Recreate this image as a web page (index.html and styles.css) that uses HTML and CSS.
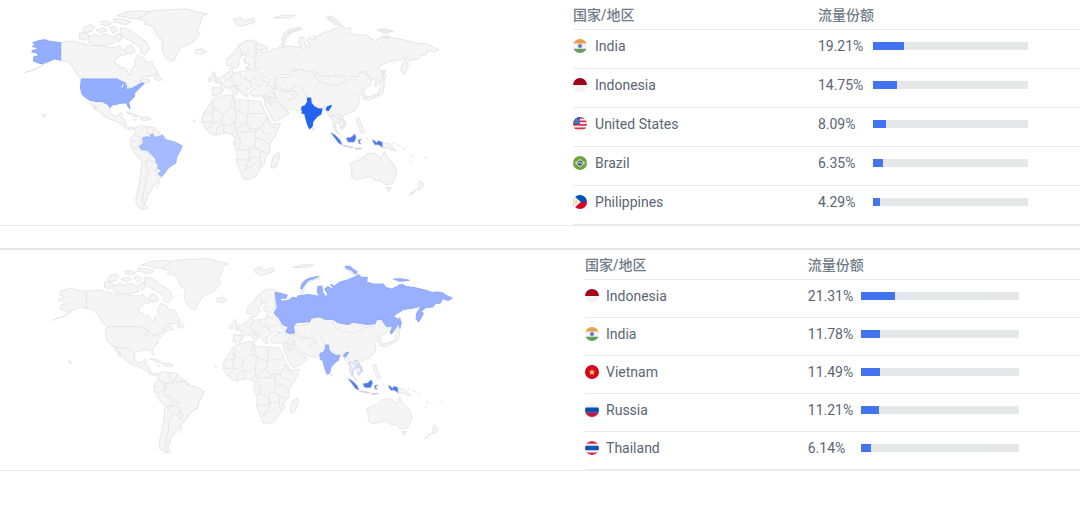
FILE: index.html
```html
<!DOCTYPE html>
<html lang="zh-CN">
<head>
<meta charset="utf-8">
<meta name="viewport" content="width=device-width, initial-scale=1">
<title>流量份额</title>
<link rel="stylesheet" href="styles.css">
</head>
<body>
<svg class="defs" aria-hidden="true">
  <defs>
    <clipPath id="round"><circle cx="8" cy="8" r="8"/></clipPath>
    <symbol id="flag-in" viewBox="0 0 16 16"><g clip-path="url(#round)"><path fill="#f4f5f8" d="M0 0h16v16H0z"/><path fill="#e9a04a" d="M0 0h16v5H0z"/><path fill="#61a356" d="M0 11h16v5H0z"/><circle cx="8" cy="8" r="2.200" fill="#5b6fc0" stroke="#9aa8dc" stroke-width=".8"/></g></symbol>
    <symbol id="flag-id" viewBox="0 0 16 16"><g clip-path="url(#round)"><path fill="#f3f3f3" d="M0 0h16v16H0z"/><path fill="#a2001d" d="M0 0h16v8H0z"/></g></symbol>
    <symbol id="flag-us" viewBox="0 0 16 16"><g clip-path="url(#round)"><path fill="#f5f0f2" d="M0 0h16v16H0z"/><path fill="#d2344c" d="M0 0h16v2H0zM0 4h16v2H0zM0 8h16v2H0zM0 12h16v2H0z"/><path fill="#2f5fb5" d="M0 0h8v8H0z"/><path stroke="#dbe4f5" stroke-width=".9" stroke-dasharray="1 1.4" d="M1 3.500h7M2 6h6"/></g></symbol>
    <symbol id="flag-br" viewBox="0 0 16 16"><circle cx="8" cy="8" r="8" fill="#6da544"/><path fill="#e9e37c" d="M8 3l6 5-6 5-6-5z"/><circle cx="8" cy="8" r="3" fill="#3c63a8"/><path d="M5.500 7.300q3-.5 5 1.700" fill="none" stroke="#f0f0f0"/></symbol>
    <symbol id="flag-ph" viewBox="0 0 16 16"><g clip-path="url(#round)"><path fill="#0052b4" d="M0 0h16v8H0z"/><path fill="#d80027" d="M0 8h16v8H0z"/><path fill="#f3f3f3" d="M0 0l9 8-9 8z"/><circle cx="3.500" cy="8" r="1.600" fill="#ffda44"/></g></symbol>
    <symbol id="flag-vn" viewBox="0 0 16 16"><circle cx="8" cy="8" r="8" fill="#d8001f"/><path fill="#ffda44" d="M8 4l1 3h3.100L9.600 8.800l1 3L8 10l-2.600 1.800 1-3L3.900 7H7z"/></symbol>
    <symbol id="flag-ru" viewBox="0 0 16 16"><g clip-path="url(#round)"><path fill="#f3f3f3" d="M0 0h16v16H0z"/><path fill="#0a4db0" d="M0 5h16v6H0z"/><path fill="#c5163d" d="M0 11h16v5H0z"/></g></symbol>
    <symbol id="flag-th" viewBox="0 0 16 16"><g clip-path="url(#round)"><path fill="#eff0f5" d="M0 0h16v16H0z"/><path fill="#d2344c" d="M0 0h16v3H0zM0 13h16v3H0z"/><path fill="#1455ae" d="M0 5.500h16v5H0z"/></g></symbol>

    <symbol id="world" viewBox="0 0 1275 660">
      <g class="land">
        <path d="M122 128L150 124 166 124 180 129 205 136 240 137 275 143 300 138 305 150 325 150 318 164 302 165 286 178 284 190 300 200 318 206 324 222 332 224 334 208 345 198 344 180 352 166 370 172 380 188 395 184 405 205 414 216 395 228 372 230 356 246 372 238 385 236 390 246 375 250 366 248 345 262 330 264 316 255 300 244 290 237 184 237 172 225 158 200 142 184 122 181z"/>
        <path d="M404 228L414 222 425 238 418 242 404 238z"/>
        <path d="M208 300L225 304 245 304 262 312 270 322 272 340 282 350 296 345 300 338 308 340 304 352 316 362 318 376 330 382 345 384 335 390 318 384 302 370 284 362 262 354 245 344 236 330 222 314 229 332 212 312z"/>
        <path d="M318 336L340 340 360 350 345 350 330 343zM362 352L378 350 392 357 380 361 362 359zM66 342l8 3 3 6-6 0zM340 358l10 1-4 3z"/>
        <path d="M345 384L362 376 380 380 402 382 415 396 432 408 440 418 470 428 486 438 480 456 470 470 466 490 448 500 438 514 426 530 415 536 416 548 400 556 394 572 384 580 380 598 374 610 384 626 365 627 348 614 348 590 354 570 360 540 362 510 366 480 350 468 338 450 330 428 334 412 345 402z"/>
        <path d="M345 402l20 12 18-4m-20 2v20l-22 12m-8-18l15-5m20 27q20 10 22 24l-16 14 12 22q-12 30-10 52-8 20-10 46l4 24m0-144l28-4 14 14-4 18m-18-14l24 20-8 6m12 20l-10 22M382 378l-2 18 12 10m10-24l-4 20m16-8l2 14"/>
        <path d="M370 42L400 32 440 29 500 27 530 35 562 42 545 50 540 75 530 88 538 102 520 125 500 135 480 145 470 165 460 184 440 178 430 160 424 140 430 125 412 108 402 84 386 74 372 72 380 64 355 58z"/>
        <path d="M525 150L545 146 557 154 548 162 528 161zM520 360l5 1-2 4z"/>
        <path d="M290 48L320 36 360 32 390 35 368 48 350 56 330 56 318 50zM283 56l28 2 20 8-14 8-22-6-16-2zM240 66l20-3 14 8-12 6-20-4zM190 84l20-10 14 6-10 14-24 6zM178 100l18-4 12 12-12 12-18-4zM206 112l20-10 14 8 14-8 24 8 6 18-26 8-30-2-22-6zM268 84l14-4 10 12-12 8zM284 108l14-8 8 14-14 12zM228 90l22-6 12 8-20 6zM300 84l20 2 20 12 18 14 22 14 8 22-14 16-14-8 4-14-22-12-16-10-22-14zM318 140l16-4 12 18-16 8-14-8z"/>
        <path d="M575 222l8-8 4 14 12 12-6 10-10-4 2-14zM566 232l10-2 0 12-10 3z"/>
      </g>
      <g class="land" transform="translate(600 0)">
        <path d="M-22 262L2 264 0 248-14 240 2 234 14 224 26 216 30 205 38 206 36 218 54 216 80 212 78 202 88 192 74 190 70 180 80 164 68 160 58 178 56 194 46 206 34 198 20 196 20 178 38 162 54 138 74 124 92 120 110 126 104 142 106 164 104 186 108 210 128 240 146 250 140 264 160 278 168 300 150 290 132 288 98 288 88 278 98 268 122 256 104 254 92 262 78 272 84 290 72 286 56 268 42 256 54 274 46 284 30 264 14 262 0 282-18 288-24 282z"/>
        <path d="M-24 300L-10 292 10 286 40 284 44 298 62 300 82 300 120 304 128 322 142 352 156 372 182 370 168 402 150 430 148 458 132 474 136 488 124 500 106 530 84 538 68 535 60 510 48 482 52 458 40 430 46 414 34 402 14 398-16 406-32 398-44 384-56 366-50 340-36 320z"/>
        <path d="M130 286L168 298 162 272 150 262 162 250 166 234 208 230 216 214 240 208 280 216 296 228 322 238 350 228 380 236 406 238 412 220 424 216 440 226 456 242 450 256 440 262 424 268 432 278 440 294 430 298 422 280 410 282 418 298 416 314 400 334 378 342 364 350 374 362 378 374 364 390 356 370 346 366 348 388 360 404 352 400 342 382 338 358 328 350 318 330 304 328 244 334 210 328 190 322 175 310 180 326 200 330 206 340 180 358 162 364 148 342 134 312z"/>
        <path d="M438 290l10 0 24-8 8-18 2-24 8-2 2 20-6 24-20 8-18 10-8 0zM408 358l10-4 4 18 12 22-10 6-8-20zM478 238l4-24 14-4-8 18z"/>
        <path d="M152 500L160 468 176 458 178 474 168 500 158 504z"/>
        <path d="M390 492L420 478 440 462 462 458 470 466 484 476 492 454 500 472 524 498 530 520 516 550 496 554 480 540 468 542 450 528 430 534 408 538 394 530 396 515zM498 562l14 0-6 12zM598 542l12 10-6 12-10 6zM590 568l-16 16-6 0 14-14zM488 428l20 4 20 20-12-2-12-6-16 0zM516 428l10 2m4 4l12 6m4 2l10 8m18 16l6 10m-12 8l8 4m38-14l8-4"/>
        <path d="M40 58l22-6 10 12 28-10 4 12-30 10-16 2-14-10zM160 54l30-8 36 0-20 8zM318 52l10-4 20 16 14 12-16-2-18-14zM470 90l24-4 22 8-20 6zM184 134q6-32 38-44l26-6-10 6-26 8-14 18-6 20zM276 386l6 0 0 6z"/>
        <path d="M-20 302L-22 322 8 344 32 322 38 290M-50 340H-22V322M-22 340V366H-52M8 344L6 362-22 370-40 388M32 322L50 330 46 360 30 376 6 372-10 384-12 404M10 372L12 398M44 298V328M50 330L84 346V300M84 340H128M84 346L78 368 92 388 122 382 140 356M46 360L44 390 34 402M78 368L50 386 52 410M92 388L76 396 50 396M52 410L62 420 58 444 46 448M76 396L104 394 108 414 104 440 88 444 86 452 58 448M104 394L122 382 130 398 150 402M108 414L130 420 148 432M104 440L122 452 140 460M86 452L88 480H50M88 480L96 470 118 474 124 500M88 480L74 510 66 514M74 510L92 500 108 490M122 452L118 474M140 356L150 376 165 384"/>
        <path d="M76 204l24 8m-42 2l4 18 26 12 20-12m-42 20l-14 6-22-20m10-18l-10 16-12 4m2 26l16-8 8 2m30-32l18 24m-26-84l-8-32m8 32l24-20M0 248l14 8m-14 24l4-16m158-2l28 14 34-4 12 14-30 16m-70-26l18 40m-4-12l28 4 22 30m-54-60l24-20 34 16 24-18m-12 26l18 2"/>
        <path d="M280 222L296 244 320 252 346 258 376 246 392 238M244 262L256 282 262 292M284 314L300 322 318 322 334 316M338 356L334 334M436 262L428 278M130 290L146 310 160 322"/>
      </g>
      <g class="land russia" transform="matrix(1.033 0 0 1.029 597 -16.400)">
        <path d="M106 143L122 146 142 152 138 161 118 160 126 170 148 166 158 158 170 161 174 154 205 150 232 154 240 158 232 142 234 126 246 124 248 142 258 158 264 148 254 134 264 126 276 132 280 128 272 120 284 124 300 112 322 106 346 96 356 90 364 98 382 98 380 112 400 118 430 118 437 128 456 134 465 128 480 124 520 128 560 138 576 144 590 142 606 144 622 154 637 160 624 168 608 162 600 176 584 178 580 187 556 190 544 200 550 208 536 232 528 222 530 206 544 184 526 190 490 195 470 207 460 216 474 224 474 240 455 268 450 264 458 247 440 246 425 225 410 225 405 238 380 240 340 233 325 240 295 235 280 225 254 224 240 217 212 221 210 232 170 235 160 245 164 265 150 268 138 262 145 248 128 240 120 225 103 205 112 190 108 165zM182 130q4-22 28-30l26-5-14 7-18 6-14 18-4 8zM316 66l12-2 10 8 14 10-6 6-12-12-14-4zM462 103l22 0 24 4-20 2-10 0zM474 122l14-2 10 6-12 2zM478 220l6 14-4 18-4-14z"/>
      </g>
      <g class="land usa">
        <path d="M38 128L60 121 75 119 90 124 122 128 122 181 104 176 90 182 75 190 68 192 54 188 40 182 42 170 56 168 50 158 36 156 36 152 52 148 50 142 38 140 46 133z"/>
        <path d="M184 237L290 237 305 244 318 250 305 253 302 264 308 265 312 254 320 256 318 268 336 265 350 257 366 248 372 250 360 262 350 272 342 280 344 288 334 298 326 306 330 326 326 322 318 308 300 310 290 313 278 314 270 322 262 312 245 304 225 304 208 300 196 292 186 282 181 262z"/>
      </g>
      <path class="aleutian" d="M78 188L50 206 14 218"/>
      <path class="land brazil" d="M358 440L370 430 368 414 382 410 392 414 390 404 398 402 402 412 428 406 434 418 466 427 486 438 478 455 470 470 467 488 448 500 438 512 425 529 415 523 424 510 412 505 416 494 408 486 406 474 394 462 382 450 366 450z"/>
      <g transform="translate(600 0)">
        <path class="land india" d="M262 294L272 294 273 308 282 320 294 326 306 327 302 342 290 350 278 365 276 380 268 386 262 372 256 352 254 341 245 339 248 334 244 328 246 320 256 316 262 306zM318 328l4-8 12-4-4 8-6 8z"/>
        <path class="land indonesia" d="M332 398L345 405 360 420 366 434 355 429 345 415zM378 414L392 412 404 402 408 412 402 426 384 426zM414 420l10-2-7 6 5 8-6-2zM456 420l8 2 5 7 5-7 12 4v16l-10-8-12 0z"/>
        <path class="land islands" d="M368 437l14 0 16 5-14 0zM404 444l22 0-14 4zM440 414l4 6"/>
        <path class="land thailand" d="M334 352l8-6 10 10 8 0 2 8-14 2-2 14-2 8-6-14 2-14z"/>
        <path class="land vietnam" d="M350 344l10-3 4 8 10 16 2 10-10 10-2-4 8-8-6-14z"/>
      </g>
    </symbol>
  </defs>
</svg>

<main>
  <section class="panel panel-first">
    <svg class="map" viewBox="0 0 1275 660" role="img" aria-label="India, Indonesia, United States, Brazil, Philippines"><use href="#world"/></svg>
    <table class="shares">
      <thead><tr><th class="country" scope="col">国家/地区</th><th scope="col">流量份额</th></tr></thead>
      <tbody>
        <tr><td><span class="name"><svg class="flag"><use href="#flag-in"/></svg>India</span></td><td><span class="share"><span class="value">19.21%</span><span class="track"><span class="fill" style="width:20%"></span></span></span></td></tr>
        <tr><td><span class="name"><svg class="flag"><use href="#flag-id"/></svg>Indonesia</span></td><td><span class="share"><span class="value">14.75%</span><span class="track"><span class="fill" style="width:15.5%"></span></span></span></td></tr>
        <tr><td><span class="name"><svg class="flag"><use href="#flag-us"/></svg>United States</span></td><td><span class="share"><span class="value">8.09%</span><span class="track"><span class="fill" style="width:8.7%"></span></span></span></td></tr>
        <tr><td><span class="name"><svg class="flag"><use href="#flag-br"/></svg>Brazil</span></td><td><span class="share"><span class="value">6.35%</span><span class="track"><span class="fill" style="width:6.6%"></span></span></span></td></tr>
        <tr><td><span class="name"><svg class="flag"><use href="#flag-ph"/></svg>Philippines</span></td><td><span class="share"><span class="value">4.29%</span><span class="track"><span class="fill" style="width:4.8%"></span></span></span></td></tr>
      </tbody>
    </table>
  </section>

  <section class="panel panel-second">
    <svg class="map" viewBox="0 0 1275 660" role="img" aria-label="Indonesia, India, Vietnam, Russia, Thailand"><use href="#world"/></svg>
    <table class="shares">
      <thead><tr><th class="country" scope="col">国家/地区</th><th scope="col">流量份额</th></tr></thead>
      <tbody>
        <tr><td><span class="name"><svg class="flag"><use href="#flag-id"/></svg>Indonesia</span></td><td><span class="share"><span class="value">21.31%</span><span class="track"><span class="fill" style="width:21.6%"></span></span></span></td></tr>
        <tr><td><span class="name"><svg class="flag"><use href="#flag-in"/></svg>India</span></td><td><span class="share"><span class="value">11.78%</span><span class="track"><span class="fill" style="width:12.1%"></span></span></span></td></tr>
        <tr><td><span class="name"><svg class="flag"><use href="#flag-vn"/></svg>Vietnam</span></td><td><span class="share"><span class="value">11.49%</span><span class="track"><span class="fill" style="width:12%"></span></span></span></td></tr>
        <tr><td><span class="name"><svg class="flag"><use href="#flag-ru"/></svg>Russia</span></td><td><span class="share"><span class="value">11.21%</span><span class="track"><span class="fill" style="width:11.4%"></span></span></span></td></tr>
        <tr><td><span class="name"><svg class="flag"><use href="#flag-th"/></svg>Thailand</span></td><td><span class="share"><span class="value">6.14%</span><span class="track"><span class="fill" style="width:6.4%"></span></span></span></td></tr>
      </tbody>
    </table>
  </section>
</main>
</body>
</html>
```
FILE: styles.css
```css
* { box-sizing: border-box; }

body {
  margin: 0;
  background: #fff;
  color: #5a6573;
  font: 14px/20px Roboto, "Noto Sans CJK SC", sans-serif;
}

.defs { display: block; width: 0; height: 0; }

.panel {
  display: grid;
  align-items: start;
  border-bottom: 1px solid #e9eaeb;
}

.panel-first {
  grid-template-columns: 53.06% 1fr;
  --row: 39px;
  --country: 48.3%;
  --flag-gap: 8px;
  --value: 55px;
  --track: 59%;
  --usa: #94aeff;
  --usa-line: #8aa6fa;
  --brazil: #a6bbff;
  --brazil-line: #9db3fa;
  --india: #2463f2;
  --india-line: #2463f2;
}

.panel-second {
  grid-template-columns: 54.17% 1fr;
  margin-top: 22px;
  border-top: 2px solid #e6e6e6;
  --row: 38px;
  --country: 45%;
  --flag-gap: 7px;
  --value: 53px;
  --track: 58%;
  --russia: #98b0ff;
  --russia-line: #91aafa;
  --india: #98b0ff;
  --india-line: #91aafa;
  --thailand-line: #bccaf6;
  --vietnam-line: #bccaf6;
}

.map { display: block; }
.panel-first .map { width: 74.200%; margin-left: 20px; }
.panel-second .map { width: 70.400%; margin-left: 47px; }

.land { fill: #f5f5f5; stroke: #e5e5e5; stroke-width: 3; stroke-linejoin: round; }
.usa { fill: var(--usa, #f5f5f5); stroke: var(--usa-line, #e5e5e5); }
.brazil { fill: var(--brazil, #f5f5f5); stroke: var(--brazil-line, #e5e5e5); }
.russia { fill: var(--russia, #f5f5f5); stroke: var(--russia-line, #e5e5e5); }
.india { fill: var(--india); stroke: var(--india-line); }
.indonesia { fill: #4a78ea; stroke: #8ca5e0; stroke-width: 2; }
.islands { stroke: #b4c0dc; stroke-width: 2; }
.thailand { stroke: var(--thailand-line, #e5e5e5); }
.vietnam { stroke: var(--vietnam-line, #e5e5e5); }
.aleutian { fill: none; stroke: #dcdfe6; stroke-width: 3; }

.shares { width: 100%; border-collapse: separate; border-spacing: 0; table-layout: fixed; }
.shares th, .shares td { padding: 0; text-align: left; border-bottom: 1px solid #e9eaeb; }
.shares th { height: 30px; font-weight: 500; color: #707b87; }
.shares td { height: var(--row); padding-bottom: 6px; }
.country { width: var(--country); }

.name { display: flex; align-items: center; gap: var(--flag-gap); }
.flag { width: 14px; height: 14px; flex: none; }

.share { display: flex; align-items: center; }
.value { width: var(--value); flex: none; }
.track { width: var(--track); height: 8px; background: #e5e7e9; }
.fill { display: block; height: 100%; background: #4273f0; }
```
